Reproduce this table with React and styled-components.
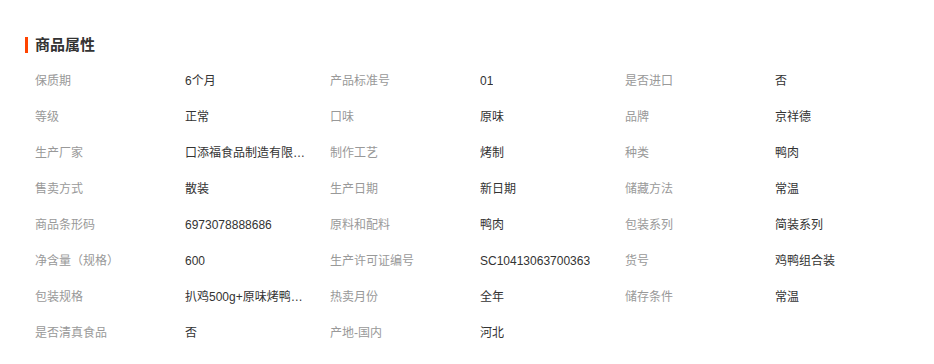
import React from "react";
import styled, { createGlobalStyle } from "styled-components";

const attrs = [
  ["保质期", "6个月"],
  ["产品标准号", "01"],
  ["是否进口", "否"],
  ["等级", "正常"],
  ["口味", "原味"],
  ["品牌", "京祥德"],
  ["生产厂家", "口添福食品制造有限公司"],
  ["制作工艺", "烤制"],
  ["种类", "鸭肉"],
  ["售卖方式", "散装"],
  ["生产日期", "新日期"],
  ["储藏方法", "常温"],
  ["商品条形码", "6973078888686"],
  ["原料和配料", "鸭肉"],
  ["包装系列", "简装系列"],
  ["净含量（规格）", "600"],
  ["生产许可证编号", "SC10413063700363"],
  ["货号", "鸡鸭组合装"],
  ["包装规格", "扒鸡500g+原味烤鸭500g"],
  ["热卖月份", "全年"],
  ["储存条件", "常温"],
  ["是否清真食品", "否"],
  ["产地-国内", "河北"],
];

function App() {
  return (
    <>
      <GlobalStyle />
      <Section>
        <Title>商品属性</Title>
        <AttrGrid>
          {attrs.map(([label, value]) => (
            <Attr key={label}>
              <Label>{label}</Label>
              <Value title={value}>{value}</Value>
            </Attr>
          ))}
        </AttrGrid>
      </Section>
    </>
  );
}

const GlobalStyle = createGlobalStyle`
  body {
    margin: 0;
    background: #fff;
    font-family: "Liberation Sans", "Noto Sans CJK SC", sans-serif;
    font-size: 12px;
  }
`;

const Section = styled.div`
  padding: 37px 0 0 25px;
`;

const Title = styled.h3`
  margin: 0;
  height: 16px;
  line-height: 16px;
  padding-left: 7px;
  border-left: 3px solid #ff4400;
  font-size: 15px;
  font-weight: bold;
  color: #333;
`;

const AttrGrid = styled.div`
  display: grid;
  grid-template-columns: repeat(3, 295px);
  padding: 10px 0 0 10px;
`;

const Attr = styled.div`
  display: flex;
  height: 36px;
  line-height: 36px;
`;

const Label = styled.span`
  width: 150px;
  flex-shrink: 0;
  color: #999;
`;

const Value = styled.span`
  max-width: 122px;
  color: #333;
  white-space: nowrap;
  overflow: hidden;
  text-overflow: ellipsis;
`;

export default App;
